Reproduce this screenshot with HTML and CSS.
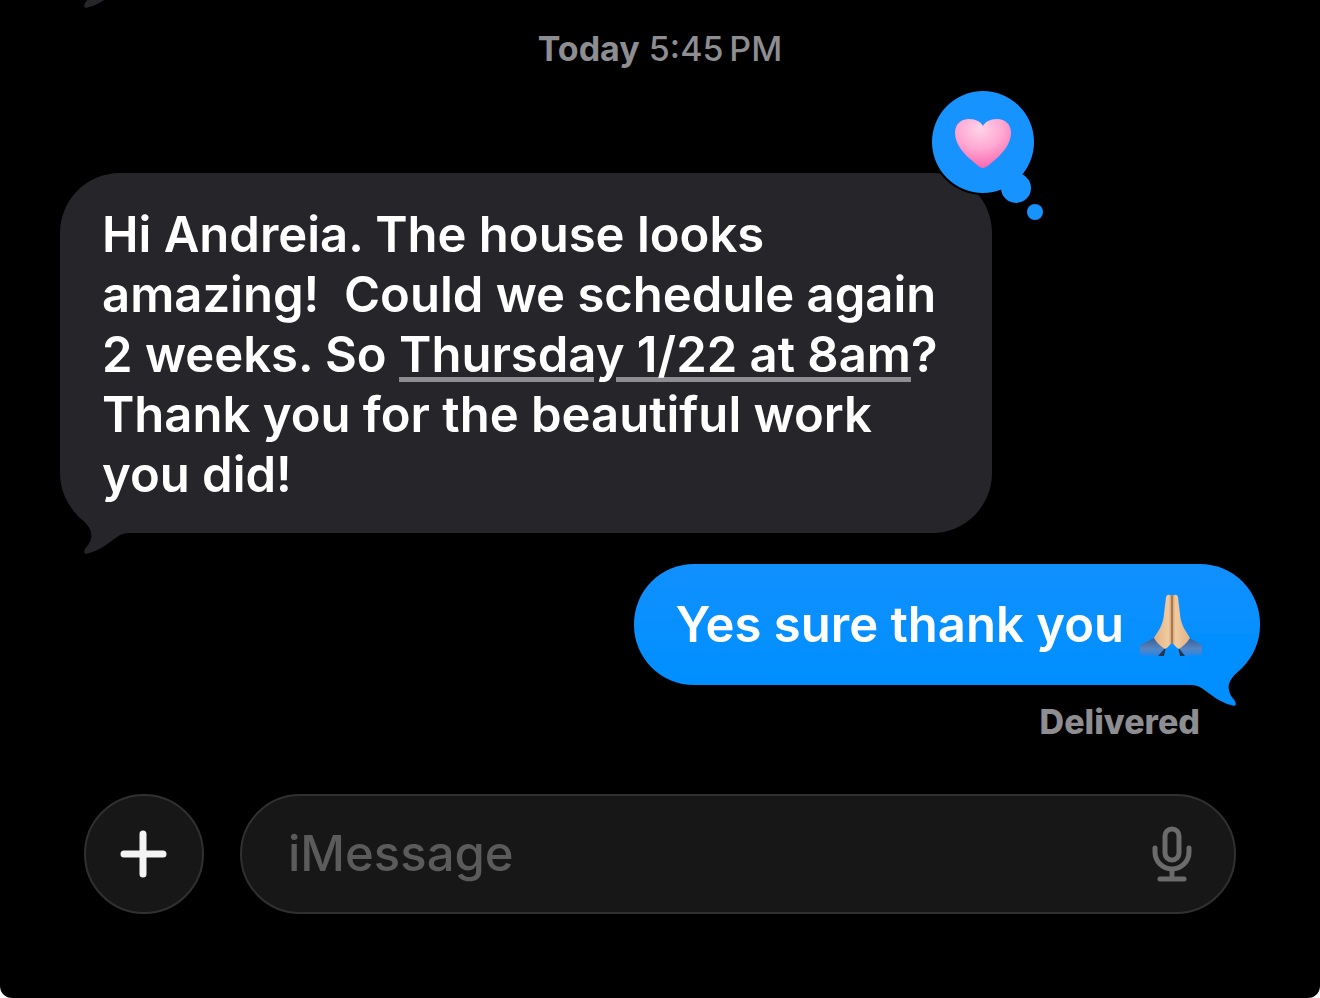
FILE: index.html
```
<!DOCTYPE html>
<html lang="en">
<head>
    <meta charset="UTF-8">
    <title>Messages</title>
    <meta name="viewport" content="width=device-width, initial-scale=1">
    <link rel="stylesheet" href="styles.css">
</head>
<body>

    <!-- bubble tail, shared by all messages -->
    <svg class="defs" aria-hidden="true">
        <symbol id="tail" viewBox="0 0 72 72">
            <path d="M2 0C4 12 10 25 19 35C27 41 33 49 31 56C30 62 27 64 25 67C23 71 25 73 29 71C39 69 50 60 57 55C60 53 63 51 71 51L71 0Z"/>
        </symbol>
    </svg>

    <div class="phone">
        <svg class="tail tail-previous" aria-hidden="true"><use href="#tail"/></svg>

        <main class="thread">
            <p class="time"><b>Today</b> 5:45&#8201;PM</p>

            <div class="bubble received">
                <svg class="tail" aria-hidden="true"><use href="#tail"/></svg>
                <p>Hi Andreia. The house looks<br>
                amazing!&nbsp; Could we schedule again<br>
                2 weeks. So <a href="#">Thursday 1/22 at 8am</a>?<br>
                Thank you for the beautiful work<br>
                you did!</p>

                <!-- heart reaction -->
                <svg class="tapback" viewBox="0 0 116 134" role="img" aria-label="Loved">
                    <defs>
                        <radialGradient id="heart" cx="45%" cy="20%" r="80%">
                            <stop offset="0" stop-color="#ffd3e9"/>
                            <stop offset=".5" stop-color="#ffa9d3"/>
                            <stop offset="1" stop-color="#fb68b0"/>
                        </radialGradient>
                    </defs>
                    <circle cx="53" cy="53" r="53" fill="#000"/>
                    <g fill="#1793ff">
                        <circle cx="53" cy="53" r="51"/>
                        <circle cx="86" cy="99" r="15"/>
                        <circle cx="105" cy="123" r="8"/>
                    </g>
                    <path fill="url(#heart)" d="M53 79C50 79 46 75 40 70C31 62 25 53 25 44C25 35 31 30 39 30C46 30 51 33 53 37C55 33 60 30 67 30C75 30 81 35 81 44C81 53 75 62 66 70C60 75 56 79 53 79Z"/>
                </svg>
            </div>

            <div class="bubble sent">
                <svg class="tail" aria-hidden="true"><use href="#tail"/></svg>
                <p>Yes sure thank you</p>
                <!-- folded hands -->
                <svg class="hands" viewBox="0 0 62 62" role="img" aria-label="Folded hands">
                    <defs>
                        <linearGradient id="cuff" x1="0" y1="0" x2="0" y2="1">
                            <stop offset="0" stop-color="#3b5f92"/>
                            <stop offset=".6" stop-color="#5585c4"/>
                            <stop offset="1" stop-color="#2487e8"/>
                        </linearGradient>
                        <linearGradient id="skin" x1="0" y1="0" x2="1" y2="0">
                            <stop offset="0" stop-color="#e0b285"/>
                            <stop offset=".4" stop-color="#f0cba0"/>
                            <stop offset=".5" stop-color="#cf9c70"/>
                            <stop offset=".6" stop-color="#f0cba0"/>
                            <stop offset="1" stop-color="#e0b285"/>
                        </linearGradient>
                    </defs>
                    <path fill="url(#cuff)" d="M0 51L14 44L26 54L20 62L0 61Z"/>
                    <path fill="url(#cuff)" d="M62 51L49 44L38 54L43 62L62 61Z"/>
                    <path fill="#26354f" d="M18 62L26 53L24 62ZM45 62L38 53L40 62Z"/>
                    <path fill="url(#skin)" d="M26 3Q27 0 30 1Q32 2 34 1Q37 0 38 3L40 20C41 32 46 37 50 44C47 49 43 52 39 55C36 54 34 50 32 49C30 50 28 54 25 55C20 52 17 49 14 44C18 37 23 32 24 20Z"/>
                    <path fill="none" stroke="#9b6945" stroke-width="1.5" d="M32 2V49"/>
                </svg>
            </div>
            <p class="status">Delivered</p>
        </main>

        <form class="composer">
            <button type="button" class="add" aria-label="Add attachment">
                <svg viewBox="0 0 48 48" width="48" height="48"><path d="M23 4V44M4 24H43"/></svg>
            </button>
            <div class="field">
                <input type="text" placeholder="iMessage" aria-label="iMessage">
                <button type="button" class="mic" aria-label="Dictate">
                    <svg viewBox="0 0 40 56" width="40" height="56">
                        <rect x="13" y="3" width="14" height="31" rx="7"/>
                        <path d="M3 22V26A17 17 0 0 0 37 26V22M20 44V53M8 53H32"/>
                    </svg>
                </button>
            </div>
        </form>
    </div>

</body>
</html>
```
FILE: styles.css
```
*{margin:0;padding:0;box-sizing:border-box;}

body{
    background-color: #fff;
    font-family: Inter, "Liberation Sans", sans-serif;
    font-weight: 500;
}
button{
    border: none;
    background: none;
    cursor: pointer;
}
svg{
    display: block;
}
.defs{
    position: absolute;
    width: 0;
    height: 0;
}

.phone{
    position: relative;
    overflow: hidden;
    display: flex;
    flex-direction: column;
    min-height: 100vh;
    padding: 29px 60px 84px;
    background-color: #000;
    border-radius: 0 0 12px 12px;
}

/*messages*/
.thread{
    flex: 1;
    display: flex;
    flex-direction: column;
}
.time{
    margin-bottom: 104px;
    color: #8d8d92;
    font-size: 34px;
    line-height: 40px;
    text-align: center;
}
.bubble{
    position: relative;
    z-index: 0;
    max-width: 932px;
    border-radius: 60px;
    color: #fff;
    font-size: 49px;
    font-weight: 600;
    line-height: 60px;
}
.received{
    width: 100%;
    padding: 32px 42px 28px;
    background-color: #26252a;
}
.received a{
    color: inherit;
    text-decoration: underline;
    text-decoration-color: #8e8e92;
    text-decoration-thickness: 5px;
    text-underline-offset: 5px;
}
.sent{
    align-self: flex-end;
    display: flex;
    align-items: center;
    gap: 16px;
    margin-top: 31px;
    padding: 30px 58px 29px 42px;
    background-image: linear-gradient(#1190ff, #008fff);
}
.hands{
    width: 62px;
    height: 62px;
}
.status{
    margin: 17px 60px 0 0;
    color: #8d8d92;
    font-size: 34px;
    font-weight: 800;
    line-height: 40px;
    text-align: right;
}

/*the tail stays behind the text*/
.tail{
    position: absolute;
    z-index: -1;
    left: 0;
    bottom: -21px;
    width: 72px;
    height: 72px;
    fill: #26252a;
}
.sent .tail{
    left: auto;
    right: 0;
    fill: #018fff;
    transform: scaleX(-1);
}
.tail-previous{
    z-index: 0;
    left: 60px;
    top: -64px;
}
.tapback{
    position: absolute;
    top: -84px;
    right: -54px;
    width: 116px;
    height: 134px;
}

/*input row*/
.composer{
    display: flex;
    gap: 36px;
    padding: 0 24px;
}
.add{
    display: flex;
    align-items: center;
    justify-content: center;
    width: 120px;
    height: 120px;
    border: 2px solid #303030;
    border-radius: 50%;
    background-color: #171717;
}
.add svg{
    fill: none;
    stroke: #f4f4f4;
    stroke-width: 7;
    stroke-linecap: round;
}
.field{
    flex: 1;
    display: flex;
    align-items: center;
    min-width: 0;
    height: 120px;
    padding: 0 42px 0 46px;
    border: 2px solid #303030;
    border-radius: 60px;
    background-color: #171717;
}
.field input{
    flex: 1;
    min-width: 0;
    border: none;
    outline: none;
    background: none;
    color: #fff;
    font: inherit;
    font-size: 49px;
    line-height: 60px;
}
.field input::placeholder{
    color: #5b5b5b;
    opacity: 1;
}
.mic svg{
    fill: none;
    stroke: #6b6b6b;
    stroke-width: 5;
    stroke-linecap: round;
}
```
